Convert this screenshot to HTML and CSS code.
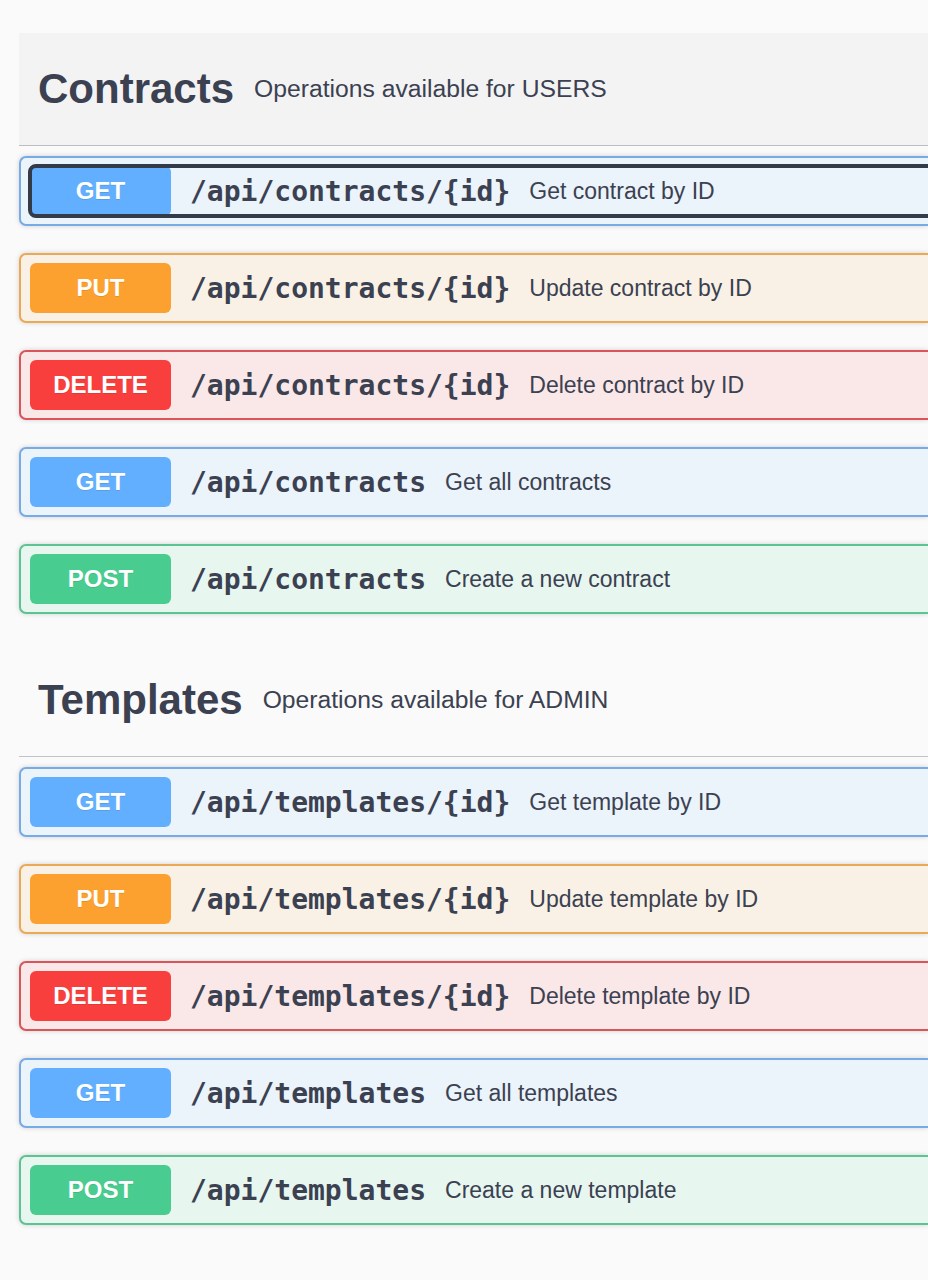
FILE: index.html
```html
<!DOCTYPE html>
<html lang="en">
<head>
<meta charset="utf-8">
<title>API</title>
<link rel="stylesheet" href="styles.css">
</head>
<body>
<div class="page">
  <section class="tag-section">
    <h3 class="tag-heading is-hover"><span class="tag-name">Contracts</span><small class="tag-desc">Operations available for USERS</small></h3>
    <div class="ops">
      <div class="op op-get"><div class="op-summary"><div class="op-control is-focused"><span class="method">GET</span><span class="path">/api/contracts/{id}</span><span class="desc">Get contract by ID</span></div></div></div>
      <div class="op op-put"><div class="op-summary"><div class="op-control"><span class="method">PUT</span><span class="path">/api/contracts/{id}</span><span class="desc">Update contract by ID</span></div></div></div>
      <div class="op op-delete"><div class="op-summary"><div class="op-control"><span class="method">DELETE</span><span class="path">/api/contracts/{id}</span><span class="desc">Delete contract by ID</span></div></div></div>
      <div class="op op-get"><div class="op-summary"><div class="op-control"><span class="method">GET</span><span class="path">/api/contracts</span><span class="desc">Get all contracts</span></div></div></div>
      <div class="op op-post"><div class="op-summary"><div class="op-control"><span class="method">POST</span><span class="path">/api/contracts</span><span class="desc">Create a new contract</span></div></div></div>
    </div>
  </section>
  <section class="tag-section">
    <h3 class="tag-heading"><span class="tag-name">Templates</span><small class="tag-desc">Operations available for ADMIN</small></h3>
    <div class="ops">
      <div class="op op-get"><div class="op-summary"><div class="op-control"><span class="method">GET</span><span class="path">/api/templates/{id}</span><span class="desc">Get template by ID</span></div></div></div>
      <div class="op op-put"><div class="op-summary"><div class="op-control"><span class="method">PUT</span><span class="path">/api/templates/{id}</span><span class="desc">Update template by ID</span></div></div></div>
      <div class="op op-delete"><div class="op-summary"><div class="op-control"><span class="method">DELETE</span><span class="path">/api/templates/{id}</span><span class="desc">Delete template by ID</span></div></div></div>
      <div class="op op-get"><div class="op-summary"><div class="op-control"><span class="method">GET</span><span class="path">/api/templates</span><span class="desc">Get all templates</span></div></div></div>
      <div class="op op-post"><div class="op-summary"><div class="op-control"><span class="method">POST</span><span class="path">/api/templates</span><span class="desc">Create a new template</span></div></div></div>
    </div>
  </section>
</div>
</body>
</html>
```

FILE: styles.css
```css
html, body {
  margin: 0;
  padding: 0;
  background: #fafafa;
  overflow: hidden;
  font-family: "Liberation Sans", Arial, sans-serif;
  color: #3b4151;
}

.page {
  padding: 33px 0 40px 19px;
  display: flex;
  flex-direction: column;
  gap: 30px;
}

.tag-section {
  display: flex;
  flex-direction: column;
  gap: 10px;
}

.tag-heading {
  margin: 0;
  height: 112px;
  display: flex;
  align-items: center;
  padding: 0 19px;
  border-bottom: 1px solid rgba(59, 65, 81, 0.3);
  white-space: nowrap;
}

.tag-heading.is-hover {
  background: #f3f3f3;
}

.tag-name {
  font-size: 42px;
  font-weight: 700;
  color: #3b4151;
}

.tag-desc {
  font-size: 24.7px;
  font-weight: 400;
  margin-left: 20px;
  color: #3b4151;
}

.ops {
  display: flex;
  flex-direction: column;
  gap: 27px;
}

.op {
  border: 2px solid;
  border-right: none;
  border-radius: 7px 0 0 7px;
  box-shadow: 0 0 5px rgba(0, 0, 0, 0.17);
  white-space: nowrap;
  overflow: hidden;
}

.op-summary {
  padding: 8px 0 8px 9px;
  display: flex;
}

.op-control {
  flex: 1;
  display: flex;
  align-items: center;
  border-radius: 6px;
  margin-right: -20px;
}

.op-control.is-focused {
  outline: 4px solid #343b48;
  outline-offset: -2px;
}

.method {
  width: 141px;
  height: 50px;
  flex: none;
  display: flex;
  align-items: center;
  justify-content: center;
  border-radius: 6px;
  color: #fff;
  font-size: 24px;
  font-weight: 700;
  text-shadow: 0 1px 0 rgba(0, 0, 0, 0.1);
}

.path {
  margin-left: 19px;
  font-family: "DejaVu Sans Mono", "Liberation Mono", monospace;
  font-weight: 700;
  font-size: 28px;
  color: #3b4151;
}

.desc {
  margin-left: 19px;
  font-size: 23px;
  color: #3b4151;
}

.op-get { background: #ebf3fb; border-color: #78aae6; }
.op-get .method { background: #61affe; }

.op-put { background: #f9f1e6; border-color: #eba855; }
.op-put .method { background: #fca130; }

.op-delete { background: #fae7e7; border-color: #d9555a; }
.op-delete .method { background: #f93e3e; }

.op-post { background: #e8f6f0; border-color: #5cc492; }
.op-post .method { background: #49cc90; }
```
